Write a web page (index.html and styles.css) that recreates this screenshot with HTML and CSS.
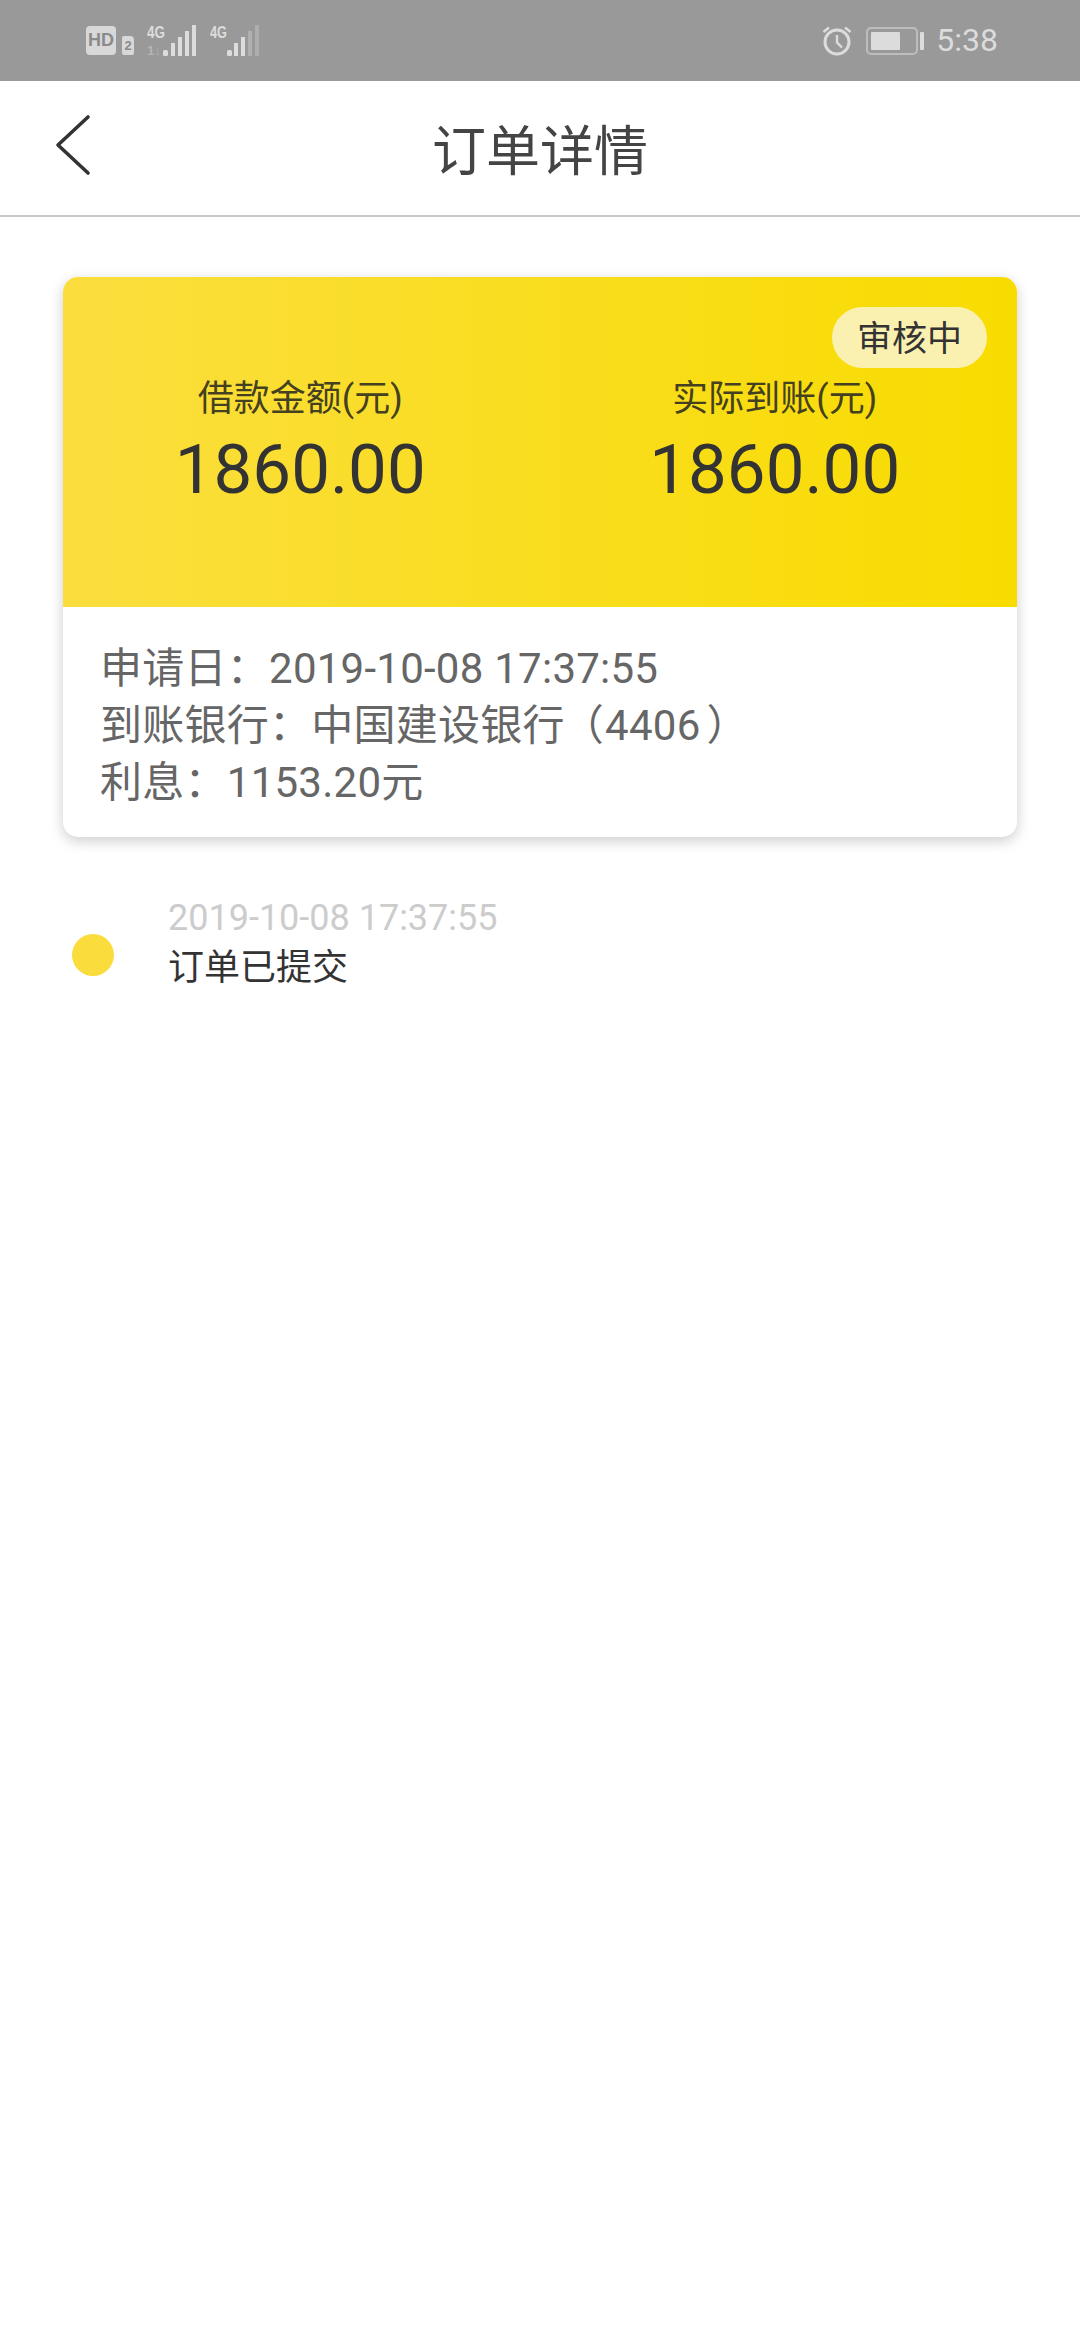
FILE: index.html
```html
<!DOCTYPE html>
<html lang="zh-CN">
<head>
<meta charset="utf-8">
<title>订单详情</title>
<link rel="stylesheet" href="styles.css">
</head>
<body>
<div class="page">
  <div class="statusbar">
    <div class="status-left">
      <span class="hd">HD</span>
      <span class="sim">2</span>
      <svg class="signal signal-a" width="65" height="38" viewBox="0 -4 65 38">
        <text x="0" y="13" class="net" textLength="18" lengthAdjust="spacingAndGlyphs">4G</text>
        <text x="0" y="30" class="net faint" textLength="14" lengthAdjust="spacingAndGlyphs">1↓</text>
        <rect x="16" y="25" width="5" height="6" rx="1.5" fill="#dcdcdc"/>
        <rect x="24" y="18" width="4" height="13" fill="#dcdcdc"/>
        <rect x="31" y="12" width="4" height="19" fill="#dcdcdc"/>
        <rect x="38" y="6" width="4" height="25" fill="#dcdcdc"/>
        <rect x="45" y="0" width="4" height="31" fill="#dcdcdc"/>
      </svg>
      <svg class="signal signal-b" width="50" height="38" viewBox="0 -4 50 38">
        <text x="0" y="13" class="net" textLength="17" lengthAdjust="spacingAndGlyphs">4G</text>
        <rect x="17" y="25" width="5" height="6" rx="1.5" fill="#dcdcdc"/>
        <rect x="24" y="18" width="4" height="13" fill="#dcdcdc"/>
        <rect x="31" y="12" width="4" height="19" fill="#dcdcdc"/>
        <rect x="38" y="6" width="4" height="25" fill="#b0b0b0"/>
        <rect x="45" y="0" width="4" height="31" fill="#adadad"/>
      </svg>
    </div>
    <div class="status-right">
      <svg width="30" height="31" viewBox="0 0 30 31" fill="none" stroke="#dcdcdc">
        <circle cx="15" cy="17" r="12" stroke-width="3"/>
        <path d="M15 10v7.5l5 5" stroke-width="2.4"/>
        <path d="M1.5 7 7 2.5M28.5 7 23 2.5" stroke-width="2.6"/>
      </svg>
      <svg width="58" height="28" viewBox="0 0 58 28" fill="none">
        <rect x="1" y="1" width="50" height="26" rx="4" stroke="#bdbdbd" stroke-width="2"/>
        <rect x="5" y="5" width="29" height="18" rx="1" fill="#dcdcdc"/>
        <rect x="54" y="5" width="4" height="18" rx="1" fill="#dcdcdc"/>
      </svg>
      <span class="time">5:38</span>
    </div>
  </div>

  <header class="navbar">
    <svg class="back" width="36" height="62" viewBox="0 0 36 62" fill="none">
      <path d="M33 3 3 31l30 28" stroke="#333" stroke-width="3.6" stroke-linecap="round" stroke-linejoin="round"/>
    </svg>
    <h1 class="title">订单详情</h1>
  </header>

  <main class="content">
    <section class="card">
      <div class="card-top">
        <span class="badge">审核中</span>
        <div class="amount">
          <div class="amount-label">借款金额(元)</div>
          <div class="amount-value">1860.00</div>
        </div>
        <div class="amount">
          <div class="amount-label">实际到账(元)</div>
          <div class="amount-value">1860.00</div>
        </div>
      </div>
      <div class="card-info">
        <div>申请日<span class="colon">：</span>2019-10-08 17:37:55</div>
        <div>到账银行<span class="colon">：</span>中国建设银行<span class="paren-l">（</span>4406<span class="paren-r">）</span></div>
        <div>利息<span class="colon">：</span>1153.20元</div>
      </div>
    </section>

    <section class="timeline-item">
      <span class="dot"></span>
      <div class="event">
        <div class="event-time">2019-10-08 17:37:55</div>
        <div class="event-name">订单已提交</div>
      </div>
    </section>
  </main>
</div>
</body>
</html>
```
FILE: styles.css
```css
* { box-sizing: border-box; }
html, body { margin: 0; padding: 0; background: #fff; }
body { font-family: Roboto, "Noto Sans CJK SC", sans-serif; }
.page { width: 1080px; height: 2340px; background: #fff; overflow: hidden; }

.statusbar {
  height: 81px;
  background: #999;
  display: flex;
  justify-content: space-between;
  padding: 25px 82px 0 86px;
}
.status-left { display: flex; align-items: flex-start; }
.hd {
  width: 30px; height: 29px; border-radius: 4px;
  background: #d8d8d8; color: #8a8a8a;
  font: 700 18px/29px "Liberation Sans", sans-serif;
  text-align: center; margin-top: 1px;
}
.sim {
  width: 12px; height: 19px; margin: 11px 0 0 6px;
  background: #d8d8d8; color: #8a8a8a; border-radius: 2px 4px 2px 2px;
  font: 700 13px/19px "Liberation Sans", sans-serif; text-align: center;
}
.signal { margin-top: -4px; }
.signal-a { margin-left: 13px; }
.signal-b { margin-left: -2px; }
.net { font: 700 17px "Liberation Sans", sans-serif; fill: #dcdcdc; }
.net.faint { fill: #b5b5b5; font-size: 13px; }
.status-right { display: flex; align-items: flex-start; }
.status-right svg:nth-child(2) { margin: 2px 0 0 14px; }
.time {
  margin: -4px 0 0 12px;
  font-size: 32px; line-height: 38px; font-weight: 400; color: #dcdcdc;
}

.navbar {
  height: 136px;
  border-bottom: 2px solid #c8c8c8;
  padding-top: 10px;
  display: flex; align-items: center; justify-content: center;
  position: relative;
}
.back { position: absolute; left: 55px; top: 33px; }
.title { margin: 0; font-size: 54px; line-height: 70px; font-weight: 400; color: #444; }

.content { padding: 60px 63px 0; }
.card {
  height: 560px; border-radius: 15px; background: #fff;
  box-shadow: 0 4px 14px rgba(0, 0, 0, .2);
  overflow: hidden;
}
.card-top {
  position: relative;
  height: 330px;
  padding: 97px 5px 0 0;
  display: grid; grid-template-columns: 1fr 1fr;
  align-items: start;
  background: linear-gradient(90deg, #fbde3e 0%, #f8dc00 100%);
}
.badge {
  position: absolute; top: 30px; right: 30px;
  width: 155px; height: 61px; border-radius: 31px;
  background: #faf0b0; color: #333;
  font-size: 35px; line-height: 65px; text-align: center;
}
.amount { text-align: center; color: #333; }
.amount-label { font-size: 36px; line-height: 50px; color: #444020; }
.amount-value { font-size: 69px; line-height: 80px; margin-top: 6px; }

.card-info {
  padding: 33px 37px 0;
  font-size: 42px; line-height: 57px; color: #666;
  letter-spacing: .25px;
  white-space: nowrap;
}
.colon { font-family: "Noto Sans CJK TC", sans-serif; line-height: 0; }
.paren-l { margin: 0 1px 0 -3px; }
.paren-r { margin-left: 6px; }

.timeline-item { display: flex; align-items: flex-start; gap: 54px; margin: 56px 0 0 9px; }
.dot { width: 42px; height: 42px; border-radius: 50%; background: #fadc3c; margin-top: 41px; flex: none; }
.event-time { font-size: 36px; line-height: 50px; color: #ccc; }
.event-name { font-size: 36px; line-height: 50px; color: #333; }
```
